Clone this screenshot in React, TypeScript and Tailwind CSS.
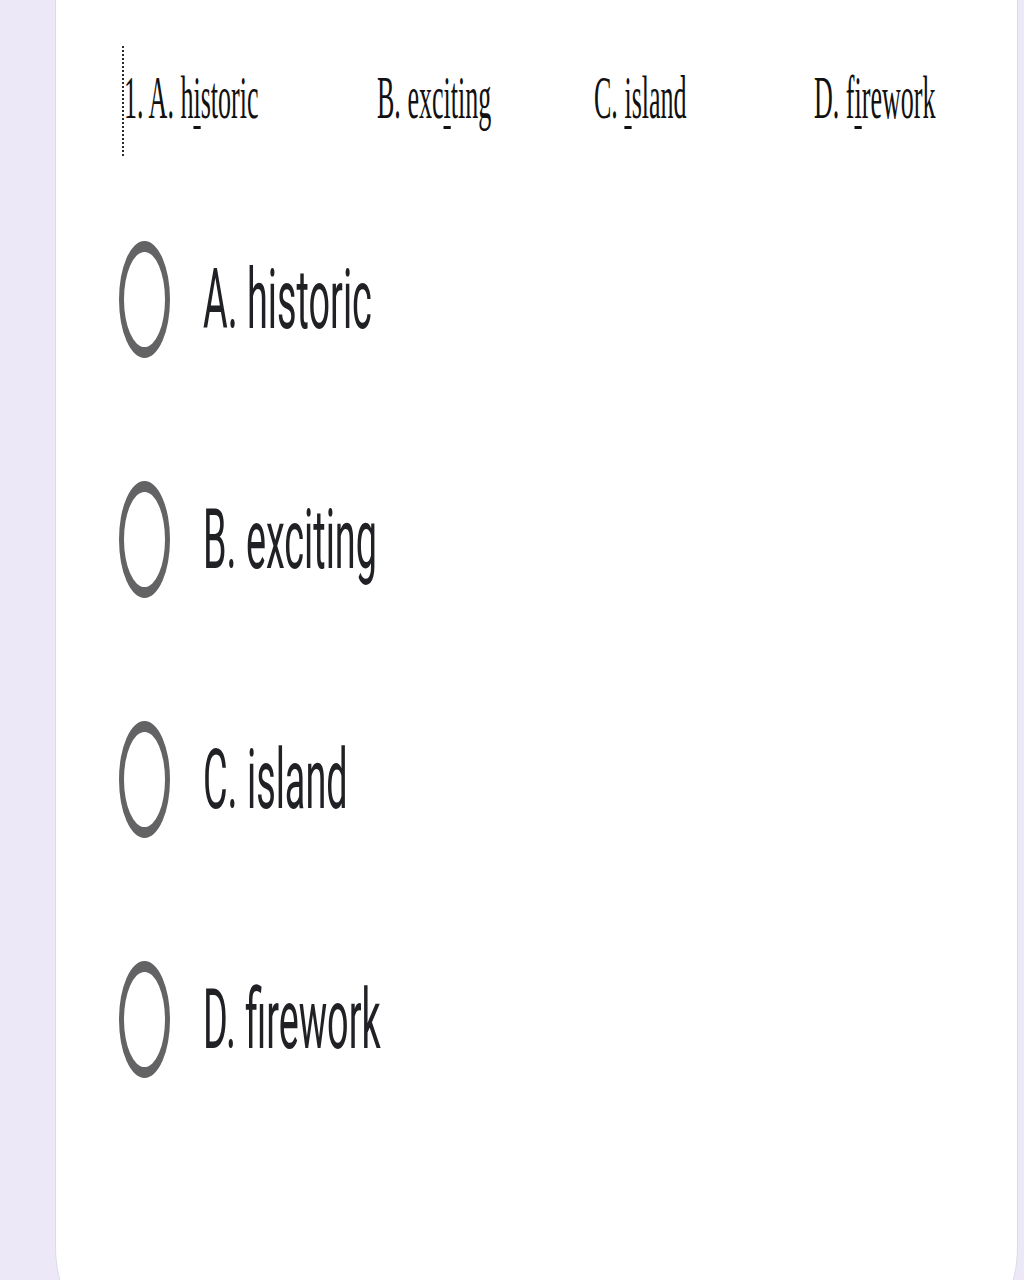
import React from 'react'

const wordRow = [
  { pre: '1. A. h', mark: 'i', post: 'storic', w: 'w-[255px]', first: true },
  { pre: 'B. exc', mark: 'i', post: 'ting', w: 'w-[217px]' },
  { pre: 'C. ', mark: 'i', post: 'sland', w: 'w-[220px]' },
  { pre: 'D. f', mark: 'i', post: 'rework', w: 'w-[200px]' },
]

const options = ['A. historic', 'B. exciting', 'C. island', 'D. firework']

export default function App() {
  return (
    <div className="h-[1280px] overflow-hidden bg-[#ece8f7] pl-[55px] pr-[6px]">
      <div className="h-[1292px] border-x border-b border-[#dadce0] bg-white rounded-b-[14px_46px]">
        {/* pasted word-doc image line */}
        <div className="ml-[66px] flex pt-[46px]">
          {wordRow.map((item) => (
            <div
              key={item.pre}
              className={`${item.w} h-[110px] shrink-0 pt-[20px] ${item.first ? 'border-l-2 border-dotted border-[#2a2a2a]' : ''}`}
            >
              <span className="inline-block origin-left scale-x-[0.42] whitespace-nowrap text-[62px] leading-[62px] text-[#111] [font-family:'Liberation_Serif',serif]">
                {item.pre}
                <span className="underline decoration-[3px] underline-offset-[8px]">{item.mark}</span>
                {item.post}
              </span>
            </div>
          ))}
        </div>

        {/* radio options */}
        <div className="ml-[63px] mt-[85px] flex flex-col gap-[123px]">
          {options.map((opt) => (
            <div key={opt} className="flex h-[117px] items-center">
              <div className="h-[117px] w-[51px] shrink-0 rounded-[50%] border-x-[5px] border-y-[11px] border-[#636366]" />
              <span className="ml-[33px] inline-block origin-left scale-x-[0.45] whitespace-nowrap text-[84px] leading-[84px] text-[#202124] [font-family:Roboto,sans-serif]">
                {opt}
              </span>
            </div>
          ))}
        </div>
      </div>
    </div>
  )
}
